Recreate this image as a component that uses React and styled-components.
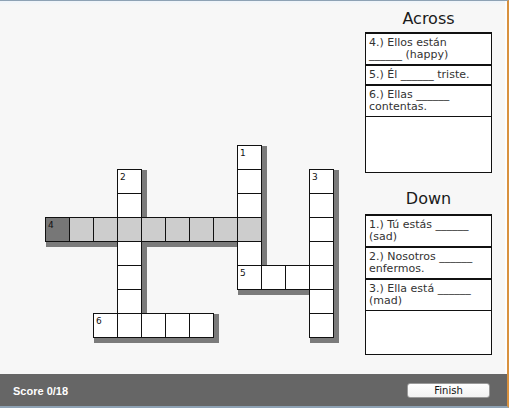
import React from 'react';
import styled, { createGlobalStyle } from 'styled-components';

const GlobalStyle = createGlobalStyle`
  html, body {
    margin: 0;
    padding: 0;
    background: #f7f7f7;
  }
  * {
    box-sizing: border-box;
  }
`;

const Frame = styled.div`
  width: 509px;
  height: 408px;
  display: flex;
  flex-direction: column;
  border-top: 1px solid #8ea2b4;
  border-right: 2px solid #d8913f;
  border-bottom: 2px solid #8ea2b4;
  font-family: "DejaVu Sans", Verdana, sans-serif;
  overflow: hidden;
`;

const Main = styled.div`
  flex: 1;
  display: flex;
  background: linear-gradient(#eef4fa 0, #f4f6f8 3px, #f7f7f7 4px);
  box-shadow: inset -2px 0 0 #fdfdfd;
`;

const Board = styled.div`
  flex: 1;
  padding: 144px 0 0 45px;
`;

const Grid = styled.div`
  display: grid;
  grid-template-columns: repeat(12, 24px);
  grid-template-rows: repeat(8, 24px);
`;

const Shadow = styled.div`
  grid-row: ${p => p.$row + 1};
  grid-column: ${p => p.$col + 1};
  width: 25px;
  height: 25px;
  box-shadow: 3px 3px 0 2px #7b7b7b;
`;

const Cell = styled.div`
  grid-row: ${p => p.$row + 1};
  grid-column: ${p => p.$col + 1};
  width: 25px;
  height: 25px;
  border: 1px solid #111;
  background: ${p => (p.$state === 'active' ? '#777' : p.$state === 'word' ? '#cdcdcd' : '#fff')};
  font-size: 9px;
  line-height: 1;
  padding: 3px 0 0 2px;
  color: #111;
`;

const Sidebar = styled.div`
  width: 127px;
  margin-right: 15px;
  display: flex;
  flex-direction: column;
`;

const Heading = styled.div`
  text-align: center;
  font-size: 16px;
  line-height: 19px;
  color: #1a1a1a;
  height: ${p => p.$height}px;
  padding-top: ${p => p.$top}px;
`;

const ClueBox = styled.div`
  height: 141px;
  border: 1px solid #111;
  background: #fff;
`;

const Clue = styled.div`
  border-top: 1px solid #111;
  border-bottom: 1px solid #111;
  padding: 3px 3px;
  font-size: 11px;
  line-height: 12px;
  color: #333;
  white-space: pre-line;
`;

const Bar = styled.div`
  height: 32px;
  background: #666;
  display: flex;
  align-items: center;
  justify-content: space-between;
  padding: 0 17px 0 13px;
`;

const Score = styled.div`
  font-family: "Liberation Sans", Arial, sans-serif;
  font-weight: bold;
  font-size: 11px;
  color: #fff;
  margin-top: 1px;
`;

const FinishButton = styled.button`
  width: 83px;
  height: 15px;
  margin-top: 1px;
  padding: 0;
  border: 1px solid #9a9a9a;
  border-radius: 3px;
  background: linear-gradient(#fff, #f2f2f2);
  font-family: "DejaVu Sans", Verdana, sans-serif;
  font-size: 10px;
  line-height: 12px;
  color: #111;
`;

const words = [
  { n: 4, row: 3, col: 0, dir: 'across', len: 9 },
  { n: 5, row: 5, col: 8, dir: 'across', len: 4 },
  { n: 6, row: 7, col: 2, dir: 'across', len: 5 },
  { n: 1, row: 0, col: 8, dir: 'down', len: 6 },
  { n: 2, row: 1, col: 3, dir: 'down', len: 7 },
  { n: 3, row: 1, col: 11, dir: 'down', len: 7 },
];

const buildCells = () => {
  const map = {};
  words.forEach(w => {
    for (let i = 0; i < w.len; i++) {
      const row = w.dir === 'down' ? w.row + i : w.row;
      const col = w.dir === 'across' ? w.col + i : w.col;
      const key = `${row},${col}`;
      if (!map[key]) map[key] = { row, col, state: 'plain', num: null };
      if (w.n === 4) map[key].state = i === 0 ? 'active' : 'word';
    }
    map[`${w.row},${w.col}`].num = w.n;
  });
  return Object.values(map);
};

const cells = buildCells();

const across = [
  '4.) Ellos están\n______ (happy)',
  '5.) Él ______ triste.',
  '6.) Ellas ______\ncontentas.',
];

const down = [
  '1.) Tú estás ______\n(sad)',
  '2.) Nosotros ______\nenfermos.',
  '3.) Ella está ______\n(mad)',
];

const App = () => {
  return (
    <>
      <GlobalStyle />
      <Frame>
        <Main>
          <Board>
            <Grid>
              {cells.map(c => (
                <Shadow key={`s${c.row}-${c.col}`} $row={c.row} $col={c.col} />
              ))}
              {cells.map(c => (
                <Cell key={`c${c.row}-${c.col}`} $row={c.row} $col={c.col} $state={c.state}>
                  {c.num}
                </Cell>
              ))}
            </Grid>
          </Board>
          <Sidebar>
            <Heading $height={31} $top={8}>Across</Heading>
            <ClueBox>
              {across.map(t => <Clue key={t}>{t}</Clue>)}
            </ClueBox>
            <Heading $height={41} $top={16}>Down</Heading>
            <ClueBox>
              {down.map(t => <Clue key={t}>{t}</Clue>)}
            </ClueBox>
          </Sidebar>
        </Main>
        <Bar>
          <Score>Score 0/18</Score>
          <FinishButton>Finish</FinishButton>
        </Bar>
      </Frame>
    </>
  );
};

export default App;
